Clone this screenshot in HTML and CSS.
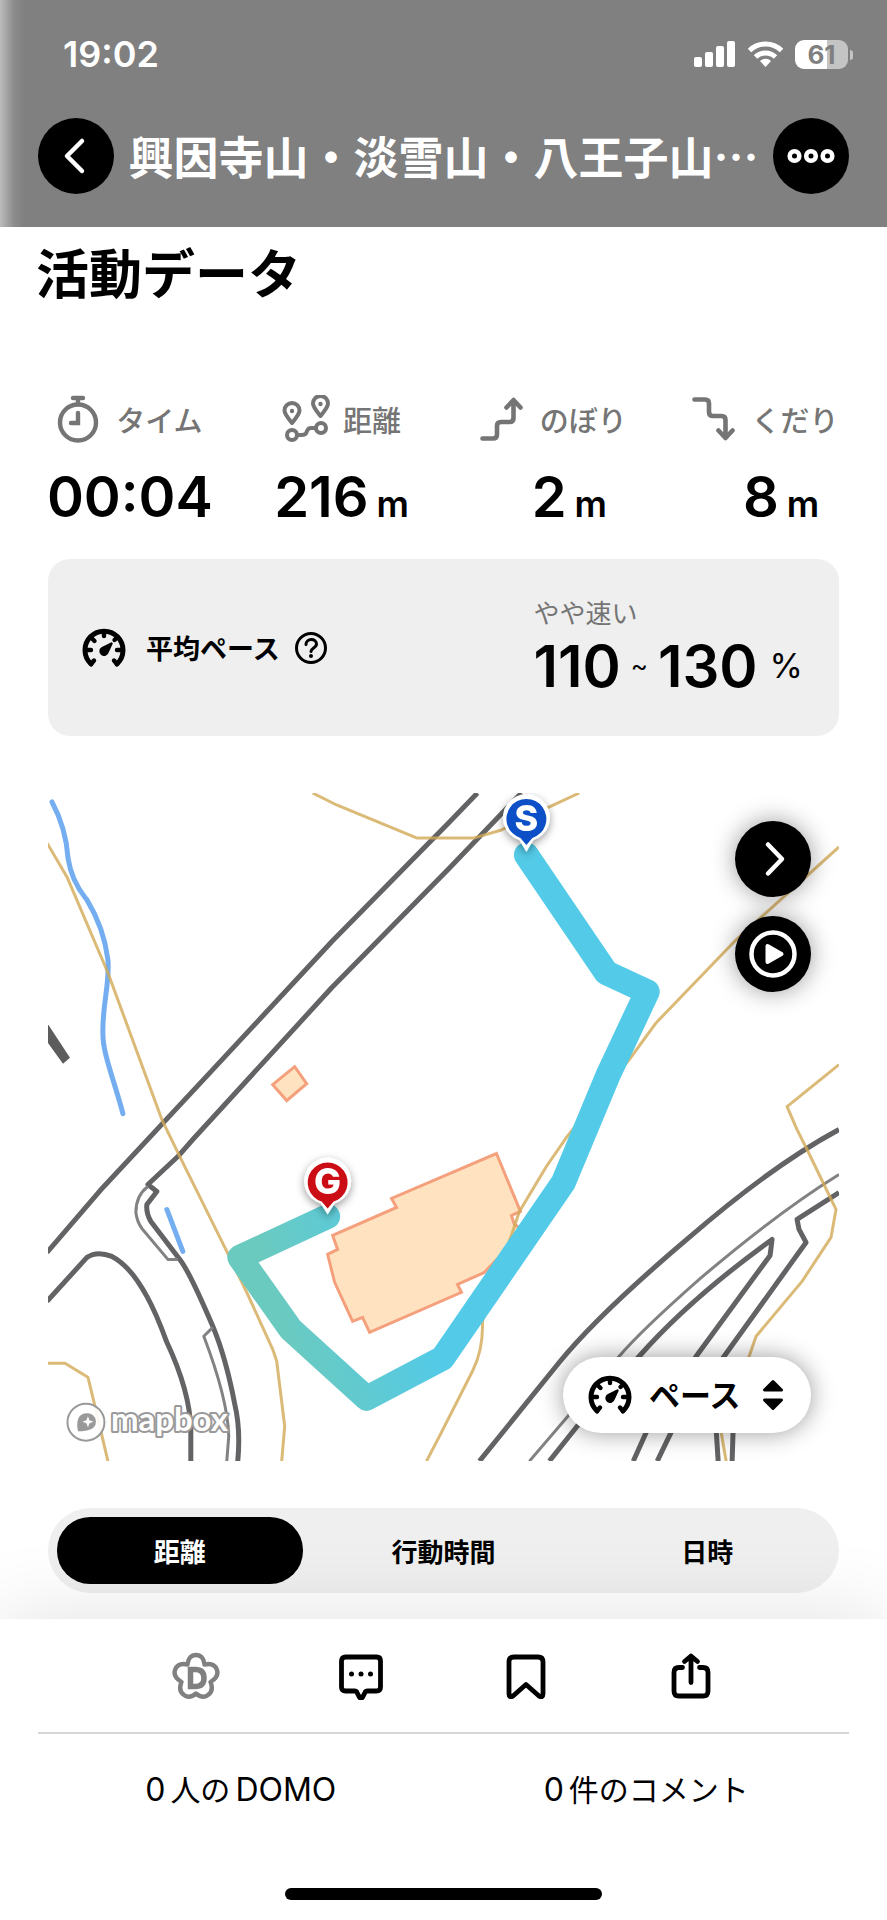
FILE: index.html
```html
<!DOCTYPE html>
<html lang="ja">
<head>
<meta charset="utf-8">
<meta name="viewport" content="width=device-width, initial-scale=1">
<title>活動データ</title>
<link rel="stylesheet" href="styles.css">
</head>
<body>
<svg class="defs" aria-hidden="true">
  <symbol id="gauge" viewBox="0 0 44 40">
    <path d="M9 36A19 19 0 1 1 35 36" fill="none" stroke="currentColor" stroke-width="5" stroke-linecap="round"/>
    <path d="M9 36l3-3.500M35 36l-3-3.500M4 22h5M40 22h-5M9.500 10l3 3M22 4v4M34.500 10l-2 2" fill="none" stroke="currentColor" stroke-width="4.400" stroke-linecap="round"/>
    <path d="M29.500 15.500L25.600 24a3.600 3.600 0 1 1-5.200-4z" fill="currentColor" stroke="currentColor" stroke-width="2.400" stroke-linejoin="round"/>
  </symbol>
</svg>

<header class="top">
  <div class="status">
    <span class="clock">19:02</span>
    <div class="status-icons">
      <svg width="42" height="28" viewBox="0 0 42 28" fill="#fff"><rect y="17" width="8" height="10" rx="2"/><rect x="11" y="12" width="8" height="15" rx="2"/><rect x="22" y="6" width="8" height="21" rx="2"/><rect x="33" y="1" width="8" height="26" rx="2"/></svg>
      <svg width="37" height="28" viewBox="0 0 37 28" fill="none" stroke="#fff" stroke-width="5"><path d="M2.500 10.500a23 23 0 0 1 32 0"/><path d="M8.500 17a14.500 14.500 0 0 1 20 0"/><path d="M18.500 27l-5.500-6a8 8 0 0 1 11 0z" fill="#fff" stroke="none"/></svg>
      <div class="battery"><span>61</span></div>
    </div>
  </div>
  <div class="nav">
    <button class="round" aria-label="戻る"><svg width="76" height="76" viewBox="0 0 76 76" fill="none" stroke="#fff" stroke-width="4.500" stroke-linecap="round" stroke-linejoin="round"><path d="M44 23L29 38l15 15"/></svg></button>
    <h1>興因寺山・淡雪山・八王子山…</h1>
    <button class="round" aria-label="メニュー"><svg width="76" height="76" viewBox="0 0 76 76" fill="none" stroke="#fff" stroke-width="4.600"><circle cx="21.500" cy="38" r="4.800"/><circle cx="38" cy="38" r="4.800"/><circle cx="54.500" cy="38" r="4.800"/></svg></button>
  </div>
</header>

<main>
  <h2>活動データ</h2>

  <section class="stats">
    <div class="stat">
      <div class="label"><svg width="42" height="48" viewBox="0 0 42 48" fill="none" stroke="currentColor" stroke-width="4.400" stroke-linecap="round"><circle cx="21" cy="27.500" r="18"/><path d="M16 3h10M21 3v6M21 18v10h-7" /></svg>タイム</div>
      <div class="value">00:04</div>
    </div>
    <div class="stat">
      <div class="label near"><svg width="48" height="48" viewBox="0 0 48 48" fill="none" stroke="currentColor" stroke-width="4"><path d="M10 28C6 23 2.500 19 2.500 15.500a7.500 7.500 0 0 1 15 0C17.500 19 14 23 10 28zM38.500 21C34.500 16 31 12 31 8.500a7.500 7.500 0 0 1 15 0C46 12 42.500 16 38.500 21z" stroke-linejoin="round"/><circle cx="10" cy="16" r="2.200" fill="currentColor" stroke="none"/><circle cx="38.500" cy="9" r="2.200" fill="currentColor" stroke="none"/><circle cx="10" cy="40" r="5"/><circle cx="39" cy="33" r="5"/><path d="M15 40h4c5 0 5-1.500 6-4s2-3 4-3h5"/></svg>距離</div>
      <div class="value">216<small>m</small></div>
    </div>
    <div class="stat">
      <div class="label"><svg width="43" height="44" viewBox="0 0 43 44" fill="none" stroke="currentColor" stroke-width="4.600" stroke-linecap="round" stroke-linejoin="round"><path d="M2.500 41.500H13q4 0 4-4V29q0-4 4-4h8.500q4 0 4-4V3.500M26.500 10.500l7-7.500 7 7.500"/></svg>のぼり</div>
      <div class="value shifted">2<small>m</small></div>
    </div>
    <div class="stat">
      <div class="label"><svg width="43" height="44" viewBox="0 0 43 44" fill="none" stroke="currentColor" stroke-width="4.600" stroke-linecap="round" stroke-linejoin="round"><path d="M2.500 2.500H13q4 0 4 4V15q0 4 4 4h8.500q4 0 4 4v17.500M26.500 33.500l7 7.500 7-7.500"/></svg>くだり</div>
      <div class="value shifted">8<small>m</small></div>
    </div>
  </section>

  <section class="pace">
    <div class="pace-name">
      <svg width="44" height="40"><use href="#gauge"/></svg>
      <span>平均ペース</span>
      <button class="help" aria-label="平均ペースとは"><svg width="34" height="34" viewBox="0 0 34 34" fill="none" stroke="currentColor" stroke-width="3"><circle cx="17" cy="17" r="14.500"/><path d="M12 13.500c0-6.500 10.500-6.500 10.500-.5 0 4-5.500 4-5.500 7.500" stroke-linecap="round"/><circle cx="17" cy="25" r="2" fill="currentColor" stroke="none"/></svg></button>
    </div>
    <div class="pace-value">
      <p>やや速い</p>
      <div class="range"><b>110</b><span class="tilde">~</span><b>130</b><span class="percent">%</span></div>
    </div>
  </section>

  <section class="map">
    <svg class="map-art" viewBox="48 793 792 669" preserveAspectRatio="xMidYMid slice" role="img" aria-label="活動ルートの地図">
      <defs>
        <linearGradient id="speed" gradientUnits="userSpaceOnUse" x1="300" y1="1399" x2="440" y2="1360"><stop offset="0" stop-color="#6bcabf"/><stop offset="1" stop-color="#53cae7"/></linearGradient>
        <filter id="pin" x="-50%" y="-50%" width="200%" height="200%"><feDropShadow dx="0" dy="3" stdDeviation="4" flood-opacity=".4"/></filter>
      </defs>
      <g fill="none" stroke="#74aef0" stroke-width="5" stroke-linecap="round">
        <path d="M52 802Q66 828 68 858C72 884 84 896 87 900Q104 928 108 960C110 985 102 1005 103 1035C103 1054 114 1080 123 1114"/>
        <path d="M167 1210l16 42"/>
      </g>
      <path d="M47 1023l23 35-7 6-16-22z" fill="#5c5c5c"/>
      <g fill="#ffe3c0" stroke="#f5a07c" stroke-width="3">
        <path d="M273 1085l22-18 12 17-20 17z"/>
        <path d="M333 1236l64-28-5-9 105-45 24 58-9 4 3 9 10 6-40 42-27 12 4 8-92 40-7-15-10 4-18-39-7-28 10-5z"/>
      </g>
      <g fill="none" stroke="#636365" stroke-width="5" stroke-linejoin="round">
        <path d="M478 793L450 822L332 942L213 1070L103 1188L47 1253"/>
        <path d="M522 793L450 868L332 988L193 1140L178 1157L148 1185l9 7-10 13q-1 8 4 17L180 1260Q190 1273 213 1327Q226 1358 235 1405Q241 1430 238 1462"/>
        <path d="M47 1302L87 1258Q97 1251 112 1257Q130 1266 147 1297Q156 1313 167 1343Q190 1392 191 1430V1462"/>
        <path d="M840 1130Q773 1166 690 1238Q600 1314 560 1363L480 1462"/>
        <path d="M550 1462L577 1428L640 1357Q690 1300 773 1240L771 1256L697 1357L647 1433L634 1462"/>
        <path d="M840 1193L798 1220l2 10 7 13L725 1357L672 1433L658 1462M717 1430l2 32M734 1430l-1 32"/>
      </g>
      <g fill="none" stroke="#828284" stroke-width="3" stroke-linejoin="round">
        <path d="M148 1187Q136 1196 136 1213Q137 1222 142 1229L168 1260H178M213 1328L204 1337Q228 1400 229 1437L227 1462"/>
        <path d="M840 1175Q780 1212 700 1280Q640 1333 620 1357L530 1462"/>
      </g>
      <g fill="none" stroke="#d2a955" stroke-opacity=".8" stroke-width="3" stroke-linejoin="round">
        <path d="M47 843L67 877L108 973L162 1120L180 1157L227 1252L247 1293L273 1350L277 1362L285 1427L282 1462"/>
        <path d="M313 793L337 805L417 838H475L502 830L550 807L580 793"/>
        <path d="M47 1364H65L88 1378L95 1407L108 1462"/>
        <path d="M840 847L737 940L657 1023L630 1060L567 1138L547 1167L520 1212L483 1322Q484 1350 473 1372L440 1437L427 1462"/>
        <path d="M840 1065L788 1107L798 1130L808 1150L837 1210L832 1238L803 1282L757 1337L749 1360L722 1433L727 1462"/>
      </g>
      <path d="M527 855L607 973L648 992L609 1075L564 1183L443 1359L367 1399L291 1330L240 1258L328 1217" fill="none" stroke="url(#speed)" stroke-width="25" stroke-linecap="round" stroke-linejoin="round"/>
      <g class="pin" filter="url(#pin)">
        <path d="M527 852l-7-12a23.500 23.500 0 1 1 14 0z" fill="#fff"/>
        <path d="M527 845l-6-7a20 20 0 1 1 12 0z" fill="#0d50c6"/>
        <text x="527" y="831">S</text>
      </g>
      <g class="pin" filter="url(#pin)">
        <path d="M328 1215l-7-11a23.500 23.500 0 1 1 14 0z" fill="#fff"/>
        <path d="M328 1209l-6-7a20 20 0 1 1 12 0z" fill="#cb0c16"/>
        <text x="328" y="1195">G</text>
      </g>
      <circle cx="86" cy="1423" r="18.500" fill="#fff" fill-opacity=".9" stroke="#999" stroke-width="2"/>
      <path d="M78 1432c-2-10 0-18 9-18a8.500 8.500 0 0 1 1 17c-4 1-7 1-10 1z" fill="#999"/>
      <path d="M88 1417l1.500 4 4 1.500-4 1.500-1.500 4-1.500-4-4-1.500 4-1.500z" fill="#fff"/>
      <text class="mapbox" x="111" y="1432">mapbox</text>
    </svg>
    <div class="map-buttons">
      <button class="round" aria-label="次へ"><svg width="76" height="76" viewBox="0 0 76 76" fill="none" stroke="#fff" stroke-width="4.500" stroke-linecap="round" stroke-linejoin="round"><path d="M33 23.500L47 38 33 52.500"/></svg></button>
      <button class="round" aria-label="再生"><svg width="76" height="76" viewBox="0 0 76 76" fill="none" stroke="#fff"><circle cx="38" cy="38" r="21.500" stroke-width="4.500"/><path d="M32.500 30v16l14-8z" fill="#fff" stroke-width="4" stroke-linejoin="round"/></svg></button>
    </div>
    <label class="layer">
      <svg width="44" height="40"><use href="#gauge"/></svg>
      <select aria-label="表示項目"><option>ペース</option><option>標高</option></select>
      <svg width="22" height="32" viewBox="0 0 22 32" fill="#000" stroke="#000" stroke-width="3" stroke-linejoin="round"><path d="M2.500 11h17L11 2.500zM2.500 21h17L11 29.500z"/></svg>
    </label>
  </section>

  <div class="tabs" role="tablist">
    <button role="tab" aria-selected="true">距離</button>
    <button role="tab" aria-selected="false">行動時間</button>
    <button role="tab" aria-selected="false">日時</button>
  </div>
</main>

<footer>
  <div class="actions">
    <button aria-label="DOMO"><svg width="48" height="48" viewBox="0 0 48 48" fill="none" stroke="#808080" stroke-width="4.400" stroke-linejoin="round"><path d="M15.500 12.500C16 6 19.500 3 24 3s8 3 8.500 9.500C39 11 43 13 44.800 17.500s-.8 9-6.300 12.500c2.500 6 1 10.500-2.500 13s-8 2-12-1.500c-4 3.500-8.500 4-12 1.500s-5-7-2.500-13C4 26.500 1.400 22 3.200 17.500S9 11 15.500 12.500z"/><path d="M18.500 17.500h4.500c6 0 9 3 9 8.500s-3 8.500-9 8.500h-4.500z" stroke-width="5.500" stroke-linejoin="miter"/></svg></button>
    <button aria-label="コメント"><svg width="48" height="48" viewBox="0 0 48 48" fill="none" stroke="#000" stroke-width="4.800" stroke-linejoin="round"><path d="M8.500 5h31q4 0 4 4v26q0 4-4 4h-9q-1.800 0-2.500 1.500l-2.400 4.700q-1.600 2-3.200 0L20 40.500q-.7-1.500-2.500-1.500h-9q-4 0-4-4V9q0-4 4-4z"/><g fill="#000" stroke="none"><circle cx="14.500" cy="22" r="2.500"/><circle cx="24" cy="22" r="2.500"/><circle cx="33.500" cy="22" r="2.500"/></g></svg></button>
    <button aria-label="保存"><svg width="48" height="48" viewBox="0 0 48 48" fill="none" stroke="#000" stroke-width="4.800" stroke-linejoin="round"><path d="M12 5h24q5 0 5 5v32q0 4-4 2L24 32.500 11 44q-4 2-4-2V10q0-5 5-5z"/></svg></button>
    <button aria-label="共有"><svg width="48" height="48" viewBox="0 0 48 48" fill="none" stroke="#000" stroke-width="4.800" stroke-linejoin="round" stroke-linecap="round"><path d="M15.500 15.500H12q-5 0-5 5V39q0 5 5 5h24q5 0 5-5V20.500q0-5-5-5h-3.500M24 30.500V4.500M17.500 9.500L24 4l6.500 5.500"/></svg></button>
  </div>
  <div class="counts">
    <a href="#domo"><span class="en">0</span>人の<span class="en">DOMO</span></a>
    <a href="#comments"><span class="en">0</span>件のコメント</a>
  </div>
  <div class="home"></div>
</footer>
</body>
</html>
```

FILE: styles.css
```css
* { box-sizing: border-box; }
body {
  margin: 0;
  min-height: 100vh;
  display: flex;
  flex-direction: column;
  background: #fff;
  color: #000;
  font-family: Inter, "Noto Sans CJK JP", sans-serif;
  font-size: 26px;
}
h1, h2, p { margin: 0; }
button, select { font: inherit; color: inherit; border: 0; padding: 0; background: none; }
svg { display: block; flex: none; }
.defs { position: absolute; width: 0; height: 0; }

.top {
  height: 227px;
  padding: 32px 38px 0;
  background: linear-gradient(90deg, #bbb 0, #8c8c8c 14px, #808080 24px);
  color: #fff;
}
.status {
  display: flex;
  justify-content: space-between;
  align-items: center;
  height: 44px;
  padding: 0 1px 0 25px;
}
.clock { font-size: 36px; font-weight: 600; }
.status-icons { display: flex; align-items: center; gap: 11px; }
.battery {
  position: relative;
  width: 53px;
  height: 29px;
  border-radius: 9px;
  background: linear-gradient(90deg, #fff 61%, #c4c4c4 61%);
  color: #808080;
  font-size: 26px;
  font-weight: 700;
  line-height: 29px;
  text-align: center;
}
.battery::after {
  content: "";
  position: absolute;
  left: 55px;
  top: 10px;
  width: 3px;
  height: 10px;
  border-radius: 0 4px 4px 0;
  background: #c4c4c4;
}
.nav { display: flex; align-items: center; justify-content: space-between; margin-top: 42px; }
.nav h1 {
  white-space: nowrap;
  font-family: "Noto Sans CJK JP", sans-serif;
  font-size: 45px;
  font-weight: 700;
  line-height: 68px;
}
.round { flex: none; width: 76px; height: 76px; border-radius: 50%; background: #000; }

main { flex: 1; }
h2 { margin: 14px 36px 0; font-size: 53px; font-weight: 700; line-height: 68px; }

.stats {
  display: grid;
  grid-template-columns: repeat(4, 1fr);
  margin-top: 82px;
  padding: 0 16px 0 24px;
}
.label {
  display: flex;
  justify-content: center;
  align-items: center;
  gap: 17px;
  height: 56px;
  color: #757575;
  font-size: 29px;
  font-weight: 500;
}
.near { gap: 13px; }
.value {
  display: flex;
  justify-content: center;
  align-items: baseline;
  gap: 8px;
  margin-top: 18px;
  font-size: 56px;
  font-weight: 600;
  line-height: 64px;
}
.value small { font-size: 36px; }
.shifted { padding-left: 32px; }

.pace {
  display: flex;
  justify-content: space-between;
  align-items: center;
  height: 177px;
  margin: 23px 48px 0;
  padding: 0 36px 0 34px;
  border-radius: 22px;
  background: #efefef;
}
.pace-name { display: flex; align-items: center; gap: 20px; font-weight: 600; }
.pace-name span { font-size: 27px; }
.help { margin-left: -6px; }
.pace-value p { color: #757575; line-height: 36px; }
.range { display: flex; align-items: center; line-height: 68px; }
.range b { font-size: 58px; font-weight: 600; }
.tilde { margin: 0 10px; font-size: 26px; }
.percent { margin-left: 12px; font-size: 34px; }

.map { position: relative; aspect-ratio: 792 / 669; margin: 57px 48px 0; overflow: hidden; }
.map-art { width: 100%; height: 100%; }
.pin text { fill: #fff; font-size: 36px; font-weight: 800; text-anchor: middle; }
.mapbox {
  fill: #fff;
  stroke: #999;
  stroke-width: 4px;
  stroke-linejoin: round;
  paint-order: stroke;
  font-family: Lato, sans-serif;
  font-size: 33px;
  font-weight: 700;
}
.map-buttons { position: absolute; top: 28px; right: 28px; display: grid; gap: 19px; }
.map-buttons .round { box-shadow: 0 0 24px rgba(0, 0, 0, .4); }
.layer {
  position: absolute;
  right: 28px;
  bottom: 28px;
  display: flex;
  align-items: center;
  gap: 17px;
  height: 76px;
  padding: 0 27px 0 25px;
  border-radius: 38px;
  background: #fff;
  box-shadow: 0 0 24px rgba(0, 0, 0, .4);
}
.layer select { appearance: none; width: 96px; font-size: 31px; font-weight: 600; outline: 0; }

.tabs {
  display: grid;
  grid-template-columns: repeat(3, 1fr);
  height: 85px;
  margin: 47px 48px 25px;
  border-radius: 43px;
  background: #efefef;
}
.tabs button { margin: 9px; border-radius: 33px; font-weight: 700; }
.tabs [aria-selected="true"] { background: #000; color: #fff; }

footer {
  position: relative;
  height: 301px;
  padding: 0 38px;
  background: #fff;
  box-shadow: 0 0 80px rgba(0, 0, 0, .12);
}
.actions {
  display: grid;
  grid-template-columns: repeat(4, 1fr);
  height: 115px;
  padding: 0 76px;
  border-bottom: 2px solid #d6d6d6;
}
.actions button { display: grid; place-items: center; }
.counts { display: grid; grid-template-columns: 1fr 1fr; padding-top: 34px; font-size: 30px; line-height: 44px; }
.counts a { display: flex; justify-content: center; align-items: baseline; gap: 5px; color: inherit; text-decoration: none; }
.en { font-size: 32px; }
.home { width: 317px; height: 12px; margin: 76px auto 0; border-radius: 6px; background: #000; }
```
